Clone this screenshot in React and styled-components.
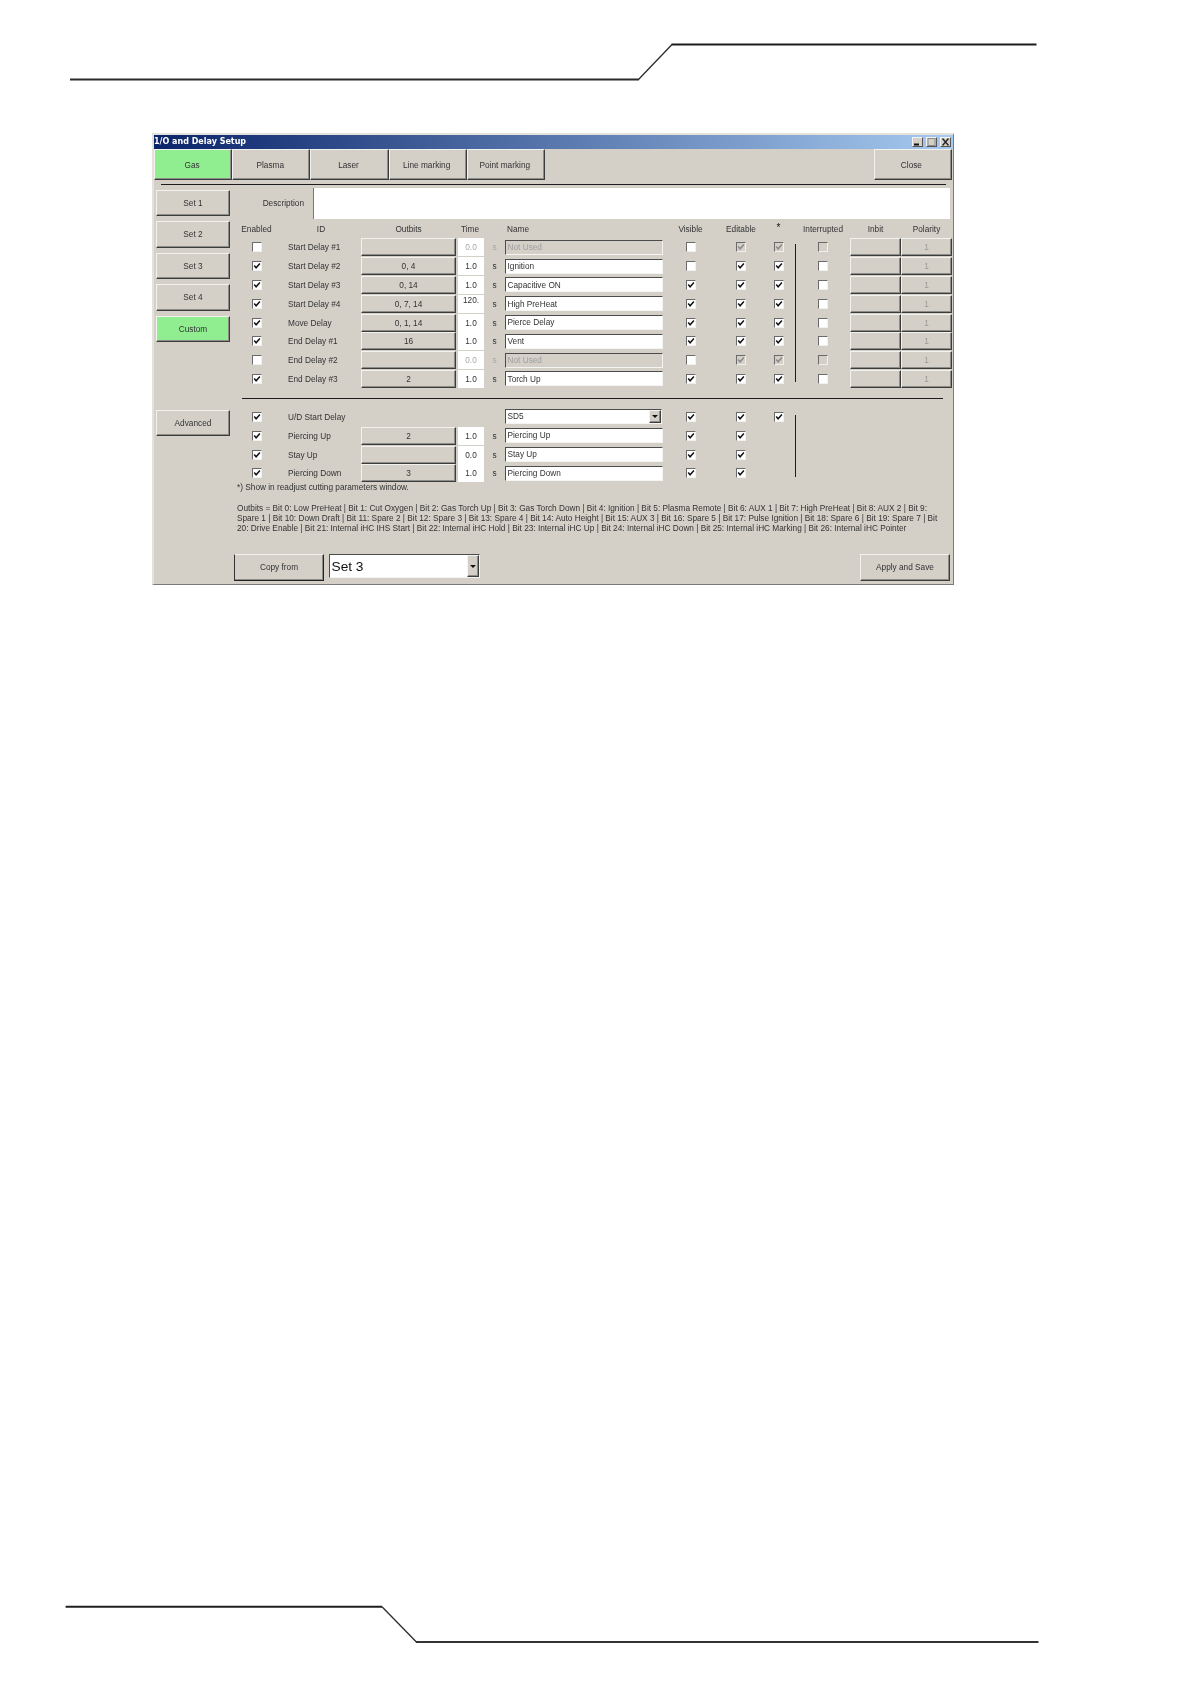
import React from 'react'
import styled, { createGlobalStyle } from 'styled-components'

const TABS = ['Gas', 'Plasma', 'Laser', 'Line marking', 'Point marking']
const SETS = ['Set 1', 'Set 2', 'Set 3', 'Set 4', 'Custom']

const DELAYS = [
  { id: 'Start Delay #1', outbits: '', time: '0.0', name: 'Not Used', off: true, enabled: false, visible: false },
  { id: 'Start Delay #2', outbits: '0, 4', time: '1.0', name: 'Ignition', enabled: true, visible: false },
  { id: 'Start Delay #3', outbits: '0, 14', time: '1.0', name: 'Capacitive ON', enabled: true, visible: true },
  { id: 'Start Delay #4', outbits: '0, 7, 14', time: '120.', name: 'High PreHeat', enabled: true, visible: true, clipped: true },
  { id: 'Move Delay', outbits: '0, 1, 14', time: '1.0', name: 'Pierce Delay', enabled: true, visible: true },
  { id: 'End Delay #1', outbits: '16', time: '1.0', name: 'Vent', enabled: true, visible: true },
  { id: 'End Delay #2', outbits: '', time: '0.0', name: 'Not Used', off: true, enabled: false, visible: false },
  { id: 'End Delay #3', outbits: '2', time: '1.0', name: 'Torch Up', enabled: true, visible: true }
]

const ADVANCED = [
  { id: 'Piercing Up', outbits: '2', time: '1.0', name: 'Piercing Up' },
  { id: 'Stay Up', outbits: '', time: '0.0', name: 'Stay Up' },
  { id: 'Piercing Down', outbits: '3', time: '1.0', name: 'Piercing Down' }
]

const Check = ({ checked, disabled }) => (
  <CheckBox $disabled={disabled}>
    {checked && (
      <svg width="8" height="8" viewBox="0 0 8 8">
        <path
          d="M1.2 3.6 L3.1 5.8 L6.9 1.6"
          fill="none"
          stroke={disabled ? '#8a8a8a' : '#111'}
          strokeWidth="1.5"
        />
      </svg>
    )}
  </CheckBox>
)

const App = () => (
  <Page>
    <GlobalStyle />
    <Rule1 width="1191" height="90" viewBox="0 0 1191 90">
      <path d="M70 79.5 H638.5" stroke="#2b2b2b" strokeWidth="2" fill="none" />
      <path d="M638 80 L672 44.5" stroke="#2b2b2b" strokeWidth="1.3" fill="none" />
      <path d="M671.5 44.5 H1036.5" stroke="#1c1c1c" strokeWidth="2" fill="none" />
    </Rule1>

    <Window>
      <TitleBar>
        <Title>1/O and Delay Setup</Title>
        <Controls>
          <Control>
            <svg width="9" height="8" viewBox="0 0 9 8">
              <rect x="1" y="5.5" width="5" height="2" fill="#111" />
            </svg>
          </Control>
          <Control>
            <svg width="9" height="8" viewBox="0 0 9 8">
              <rect x="1" y="0.5" width="7" height="7" fill="none" stroke="#8a8a8a" />
            </svg>
          </Control>
          <Control>
            <svg width="9" height="8" viewBox="0 0 9 8">
              <path d="M1.5 0.5 L7.5 7.5 M7.5 0.5 L1.5 7.5" stroke="#222" strokeWidth="1.3" />
            </svg>
          </Control>
        </Controls>
      </TitleBar>

      <TabBar>
        {TABS.map(tab => (
          <Tab key={tab} $active={tab === 'Gas'}>
            {tab}
          </Tab>
        ))}
        <CloseTab>Close</CloseTab>
      </TabBar>
      <Separator />

      <Body>
        <Side>
          {SETS.map(set => (
            <SetButton key={set} $active={set === 'Custom'}>
              {set}
            </SetButton>
          ))}
          <AdvancedButton>Advanced</AdvancedButton>
        </Side>

        <Main>
          <DescriptionRow>
            <DescriptionLabel>Description</DescriptionLabel>
            <DescriptionField />
          </DescriptionRow>

          <DelayGrid>
            <HeadCell>Enabled</HeadCell>
            <IdHead>ID</IdHead>
            <HeadCell>Outbits</HeadCell>
            <HeadCell>Time</HeadCell>
            <span />
            <NameHead>Name</NameHead>
            <HeadCell>Visible</HeadCell>
            <HeadCell>Editable</HeadCell>
            <StarHead>*</StarHead>
            <span />
            <HeadCell>Interrupted</HeadCell>
            <HeadCell>Inbit</HeadCell>
            <HeadCell>Polarity</HeadCell>
            <GroupLine $rows={8} $top={6} $bottom={6} />
            {DELAYS.map(row => (
              <React.Fragment key={row.id}>
                <Centered>
                  <Check checked={row.enabled} />
                </Centered>
                <IdCell>{row.id}</IdCell>
                <GridButton>{row.outbits}</GridButton>
                <TimeBox $off={row.off} $clipped={row.clipped}>
                  {row.time}
                </TimeBox>
                <Unit $off={row.off}>s</Unit>
                <NameBox $off={row.off}>{row.name}</NameBox>
                <Centered>
                  <Check checked={row.visible} />
                </Centered>
                <Centered>
                  <Check checked disabled={row.off} />
                </Centered>
                <Centered>
                  <Check checked disabled={row.off} />
                </Centered>
                <Centered>
                  <Check disabled={row.off} />
                </Centered>
                <GridButton />
                <PolarityButton>1</PolarityButton>
              </React.Fragment>
            ))}
          </DelayGrid>

          <SectionLine />

          <AdvancedGrid>
            <GroupLine $rows={4} $top={7.5} $bottom={5.5} />
            <Centered>
              <Check checked />
            </Centered>
            <IdCell>U/D Start Delay</IdCell>
            <span />
            <span />
            <span />
            <SmallCombo>
              <ComboText>SD5</ComboText>
              <ArrowButton />
            </SmallCombo>
            <Centered>
              <Check checked />
            </Centered>
            <Centered>
              <Check checked />
            </Centered>
            <Centered>
              <Check checked />
            </Centered>
            <span />
            <span />
            <span />
            {ADVANCED.map(row => (
              <React.Fragment key={row.id}>
                <Centered>
                  <Check checked />
                </Centered>
                <IdCell>{row.id}</IdCell>
                <GridButton>{row.outbits}</GridButton>
                <TimeBox>{row.time}</TimeBox>
                <Unit>s</Unit>
                <NameBox>{row.name}</NameBox>
                <Centered>
                  <Check checked />
                </Centered>
                <Centered>
                  <Check checked />
                </Centered>
                <span />
                <span />
                <span />
                <span />
              </React.Fragment>
            ))}
          </AdvancedGrid>

          <Footnote>*) Show in readjust cutting parameters window.</Footnote>
          <Legend>
            Outbits = Bit 0: Low PreHeat | Bit 1: Cut Oxygen | Bit 2: Gas Torch Up | Bit 3: Gas Torch Down | Bit 4: Ignition | Bit 5: Plasma Remote | Bit 6: AUX 1 | Bit 7: High PreHeat | Bit 8: AUX 2 | Bit 9:
            <br />
            Spare 1 | Bit 10: Down Draft | Bit 11: Spare 2 | Bit 12: Spare 3 | Bit 13: Spare 4 | Bit 14: Auto Height | Bit 15: AUX 3 | Bit 16: Spare 5 | Bit 17: Pulse Ignition | Bit 18: Spare 6 | Bit 19: Spare 7 | Bit
            <br />
            20: Drive Enable | Bit 21: Internal iHC IHS Start | Bit 22: Internal iHC Hold | Bit 23: Internal iHC Up | Bit 24: Internal iHC Down | Bit 25: Internal iHC Marking | Bit 26: Internal iHC Pointer
          </Legend>

          <FooterBar>
            <CopyButton>Copy from</CopyButton>
            <LargeCombo>
              <LargeComboText>Set 3</LargeComboText>
              <ArrowButton />
            </LargeCombo>
            <ApplyButton>Apply and Save</ApplyButton>
          </FooterBar>
        </Main>
      </Body>
    </Window>

    <Rule2 width="1191" height="104" viewBox="0 0 1191 104">
      <path d="M65.6 26.7 H382" stroke="#1f1f1f" strokeWidth="2" fill="none" />
      <path d="M382 26.7 L416.4 62" stroke="#2b2b2b" strokeWidth="1.3" fill="none" />
      <path d="M416 62 H1038.5" stroke="#333" strokeWidth="2" fill="none" />
    </Rule2>
  </Page>
)

const GlobalStyle = createGlobalStyle`
  html, body {
    margin: 0;
    padding: 0;
    background: #fff;
  }
  body {
    font-family: 'Liberation Sans', Arial, sans-serif;
    font-size: 8.27px;
    color: #333;
  }
`

const Page = styled.div`
  width: 1191px;
  height: 1684px;
  display: flex;
  flex-direction: column;
  overflow: hidden;
`

const Rule1 = styled.svg`
  display: block;
  flex: none;
`

const Rule2 = styled(Rule1)`
  margin-top: auto;
`

const Window = styled.div`
  flex: none;
  box-sizing: border-box;
  width: 802px;
  margin: 42.5px 0 0 152px;
  background: #d4d0c8;
  border-top: 2.5px solid #e4e2dd;
  border-left: 2px solid #e4e2dd;
  border-right: 1.5px solid #7a7a7a;
  border-bottom: 1.5px solid #7a7a7a;
  filter: blur(0.3px);
`

const TitleBar = styled.div`
  height: 14px;
  display: flex;
  align-items: center;
  justify-content: space-between;
  background: linear-gradient(to right, #0a246a, #a6caf0);
`

const Title = styled.span`
  font-family: 'DejaVu Sans', sans-serif;
  font-weight: bold;
  font-size: 8px;
  color: #fff;
`

const Controls = styled.div`
  display: flex;
  gap: 3px;
  padding-right: 2px;
`

const Control = styled.div`
  width: 11px;
  height: 10px;
  box-sizing: border-box;
  display: flex;
  align-items: center;
  justify-content: center;
  background: #d4d0c8;
  border: 1px solid;
  border-color: #f4f4f4 #555 #555 #f4f4f4;
`

const RaisedButton = styled.div`
  box-sizing: border-box;
  display: flex;
  align-items: center;
  justify-content: center;
  background: ${props => (props.$active ? '#90ee90' : '#d4d0c8')};
  border: 1px solid;
  border-color: #f2f2ef #3c3c3c #3c3c3c #f2f2ef;
  box-shadow: inset -1px -1px 0 #8c8c88;
`

const TabBar = styled.div`
  display: flex;
  margin-top: 0.5px;
  height: 31px;
`

const Tab = styled(RaisedButton)`
  width: 78.2px;
  padding: 1px 2px 0 0;
`

const CloseTab = styled(Tab)`
  margin: 0 1px 0 auto;
  padding-right: 3px;
`

const Separator = styled.div`
  height: 1.2px;
  margin: 4.3px 7px 0 7px;
  background: #1c1c1c;
`

const Body = styled.div`
  display: grid;
  grid-template-columns: 74px 716px;
  column-gap: 6px;
  padding: 2.5px 0 0 2px;
`

const Side = styled.div`
  display: flex;
  flex-direction: column;
  gap: 5px;
  padding-top: 2px;
`

const SetButton = styled(RaisedButton)`
  height: 26.5px;
`

const AdvancedButton = styled(SetButton)`
  margin-top: 62.5px;
`

const Main = styled.div`
  display: flex;
  flex-direction: column;
  min-width: 0;
`

const DescriptionRow = styled.div`
  display: flex;
  align-items: center;
  height: 31px;
`

const DescriptionLabel = styled.span`
  width: 68px;
  text-align: right;
`

const DescriptionField = styled.div`
  flex: 1;
  height: 100%;
  margin: 0 2px 0 9px;
  background: #fff;
  border-left: 1px solid #777;
`

const DelayGrid = styled.div`
  display: grid;
  grid-template-columns: 41px 84px 95px 28px 21px 158px 55px 46px 29px 3px 54px 51px 51px;
  grid-template-rows: 18px repeat(8, 18.8px);
  margin-top: 1px;
  align-items: center;
`

const AdvancedGrid = styled(DelayGrid)`
  grid-template-rows: repeat(4, 18.9px);
  margin-top: 8px;
`

const HeadCell = styled.div`
  text-align: center;
  white-space: nowrap;
  padding-top: 1px;
`

const IdHead = styled(HeadCell)`
  padding-left: 4px;
`

const NameHead = styled(HeadCell)`
  text-align: left;
  padding-left: 2px;
`

const StarHead = styled(HeadCell)`
  font-size: 10px;
  margin-top: -4px;
  color: #111;
`

const GroupLine = styled.div`
  grid-column: 10;
  grid-row: ${props => (props.$rows === 8 ? '2 / span 8' : '1 / span 4')};
  justify-self: end;
  align-self: stretch;
  width: 1.5px;
  margin: ${props => props.$top}px 0 ${props => props.$bottom}px;
  background: #1c1c1c;
`

const Centered = styled.div`
  display: flex;
  align-items: center;
  justify-content: center;
`

const CheckBox = styled.span`
  box-sizing: border-box;
  width: 10px;
  height: 10px;
  display: flex;
  align-items: center;
  justify-content: center;
  background: ${props => (props.$disabled ? '#d4d0c8' : '#fff')};
  border: 1px solid;
  border-color: #6a6a6a #f0f0ee #f0f0ee #6a6a6a;
`

const IdCell = styled.div`
  padding: 1px 0 0 11px;
  white-space: nowrap;
`

const GridButton = styled(RaisedButton)`
  height: 18px;
  padding-top: 1px;
`

const PolarityButton = styled(GridButton)`
  color: #9a9a9a;
`

const TimeBox = styled.div`
  box-sizing: border-box;
  justify-self: end;
  width: 26px;
  height: 18px;
  padding-top: 1px;
  display: flex;
  align-items: ${props => (props.$clipped ? 'flex-start' : 'center')};
  justify-content: center;
  background: #fff;
  color: ${props => (props.$off ? '#a8a8a8' : '#333')};
`

const Unit = styled.div`
  text-align: center;
  padding-top: 1px;
  color: ${props => (props.$off ? '#a8a8a8' : '#333')};
`

const NameBox = styled.div`
  box-sizing: border-box;
  height: 15px;
  display: flex;
  align-items: center;
  padding: 0.5px 0 0 1.5px;
  white-space: nowrap;
  background: ${props => (props.$off ? '#d4d0c8' : '#fff')};
  color: ${props => (props.$off ? '#a0a0a0' : '#333')};
  border: 1px solid;
  border-color: #4c4c4c #f4f4f2 #f4f4f2 #4c4c4c;
`

const SmallCombo = styled(NameBox)`
  width: 157px;
  padding-top: 0;
  justify-content: space-between;
`

const ComboText = styled.span`
  white-space: nowrap;
`

const ArrowButton = styled(RaisedButton)`
  width: 12.5px;
  height: 100%;
  flex: none;
  background: #d4d0c8;

  &::after {
    content: '';
    border-left: 3px solid transparent;
    border-right: 3px solid transparent;
    border-top: 3px solid #111;
  }
`

const SectionLine = styled.div`
  height: 1.2px;
  margin: 9.8px 9px 0 6px;
  background: #1c1c1c;
`

const Footnote = styled.div`
  margin: 0 0 0 1px;
  line-height: 10px;
`

const Legend = styled.div`
  margin: 11px 0 0 1px;
  line-height: 10px;
  white-space: nowrap;
`

const FooterBar = styled.div`
  display: flex;
  align-items: flex-start;
  margin: 20px 2px 3px -2px;
`

const CopyButton = styled(RaisedButton)`
  width: 90px;
  height: 27px;
  border-color: #f2f2ef #222 #222 #333;
`

const LargeCombo = styled(NameBox)`
  width: 151px;
  height: 24px;
  margin-left: 5px;
  justify-content: space-between;
`

const LargeComboText = styled.span`
  font-size: 13.7px;
  color: #111;
`

const ApplyButton = styled(RaisedButton)`
  width: 90px;
  height: 27px;
  margin-left: auto;
`

export default App
